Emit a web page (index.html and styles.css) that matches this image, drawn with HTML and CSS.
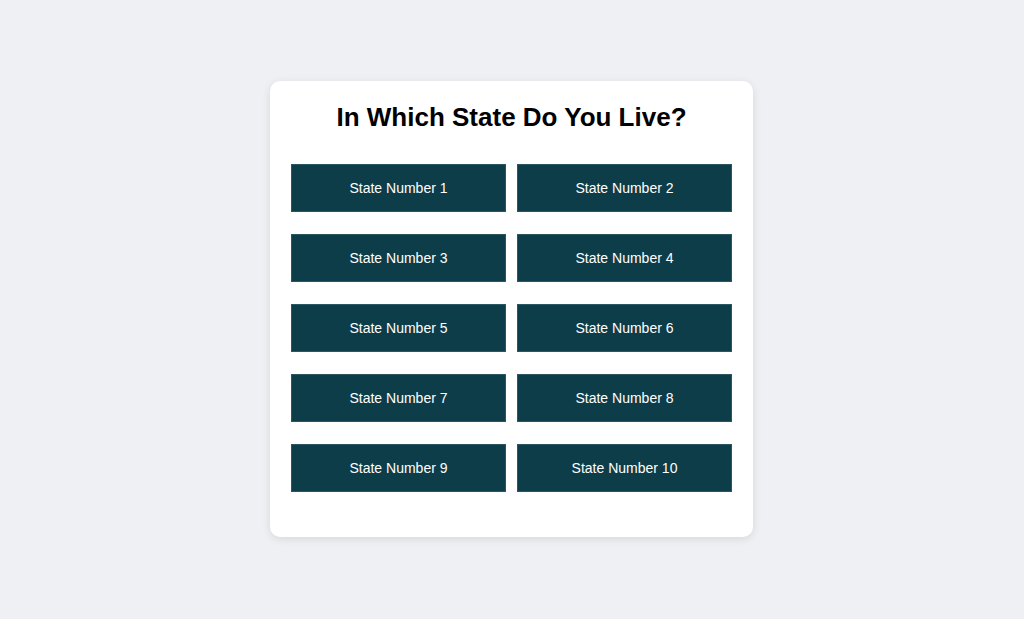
FILE: index.html
```html
<!DOCTYPE html>
<html lang="en">
<head>
  <meta charset="UTF-8">
  <meta name="viewport" content="width=device-width, initial-scale=1.0">
  <title>In Which State Do You Live?</title>
  <link rel="stylesheet" href="styles.css">
</head>
<body>

  <div class="card">
    <h1>In Which State Do You Live?</h1>

    <div class="states">
      <button class="state">State Number 1</button>
      <button class="state">State Number 2</button>
      <button class="state">State Number 3</button>
      <button class="state">State Number 4</button>
      <button class="state">State Number 5</button>
      <button class="state">State Number 6</button>
      <button class="state">State Number 7</button>
      <button class="state">State Number 8</button>
      <button class="state">State Number 9</button>
      <button class="state">State Number 10</button>
    </div>
  </div>

</body>
</html>
```

FILE: styles.css
```css
body {
  font-family: 'Liberation Sans', Arial, sans-serif;
  background-color: #eef0f4;
  color: #000;
  display: flex;
  justify-content: center;
  align-items: center;
  height: 100vh;
  margin: 0;
}

.card {
  width: 441px;
  padding: 21px 21px 45px;
  margin: 0 1px 2px 0;
  background-color: #fff;
  border-radius: 10px;
  box-shadow: 0 2px 8px rgba(0, 0, 0, 0.1);
}

h1 {
  font-size: 26px;
  line-height: 30px;
  text-align: center;
  margin: 0 0 32px;
}

.states {
  display: grid;
  grid-template-columns: 1fr 1fr;
  column-gap: 11px;
  row-gap: 22px;
}

.state {
  height: 48px;
  font-family: inherit;
  font-size: 14px;
  color: #fff;
  background-color: #0e3d4a;
  border: 1px solid #2b5763;
  cursor: pointer;
}

.state:hover {
  background-color: #145161;
}
```
